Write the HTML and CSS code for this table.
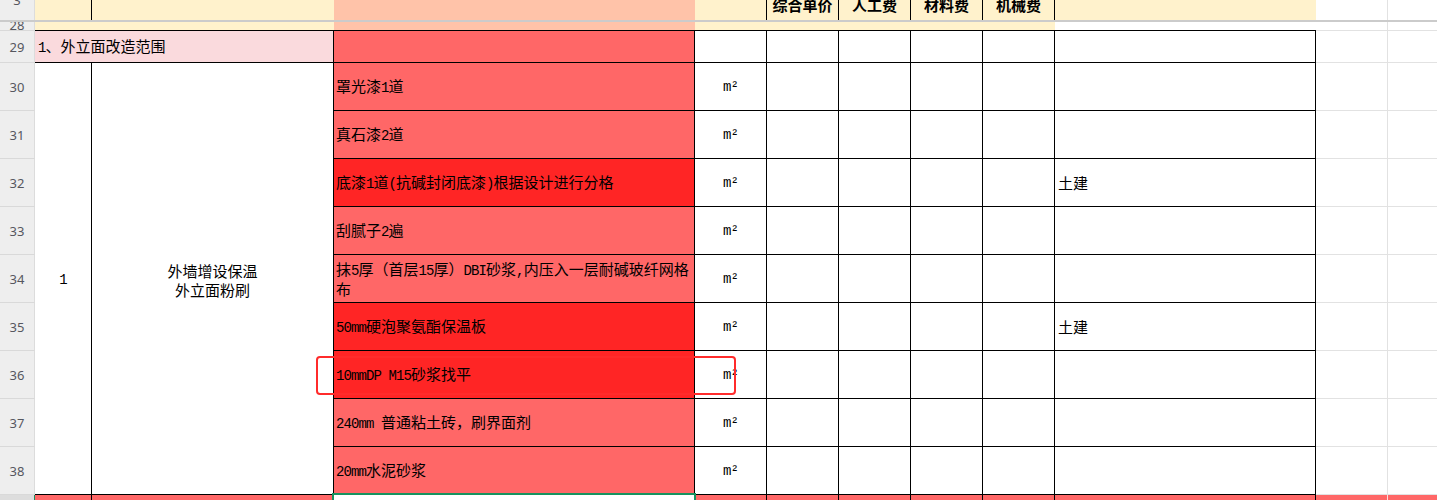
FILE: index.html
```html
<!DOCTYPE html>
<html lang="zh-CN">
<head>
<meta charset="utf-8">
<title>外立面改造范围</title>
<link rel="stylesheet" href="styles.css">
</head>
<body>
<div class="sheet">
  <div class="grid">
    <!-- row 3 -->
    <div class="rh rh-top"><span class="rn rn-3">3</span></div>
    <div class="f-yel bR"></div>
    <div class="f-yel"></div>
    <div class="f-pch"></div>
    <div class="f-yel bR"></div>
    <div class="f-yel bR hd"><span>综合单价</span></div>
    <div class="f-yel bR hd"><span>人工费</span></div>
    <div class="f-yel bR hd"><span>材料费</span></div>
    <div class="f-yel bR hd"><span>机械费</span></div>
    <div class="f-yel"></div>
    <div class="gR"></div>
    <div></div>

    <!-- freeze line -->
    <div class="freeze"></div>

    <!-- row 28 -->
    <div class="rh rh-top"><span class="rn rn-28">28</span></div>
    <div class="f-yel bB"></div>
    <div class="f-yel bB"></div>
    <div class="f-pch bB"></div>
    <div class="f-yel bB"></div>
    <div class="f-yel bB"></div>
    <div class="f-yel bB"></div>
    <div class="f-yel bB"></div>
    <div class="f-yel bB"></div>
    <div class="bB"></div>
    <div class="g"></div>
    <div class="gB"></div>

    <!-- row 29 -->
    <div class="rh"><span class="rn">29</span></div>
    <div class="c f-pnk span2 txt"><span class="t"><span class="l">1</span>、外立面改造范围</span></div>
    <div class="c f-red1"></div>
    <div class="c"></div>
    <div class="c"></div>
    <div class="c"></div>
    <div class="c"></div>
    <div class="c"></div>
    <div class="c"></div>
    <div class="g"></div>
    <div class="gB"></div>

    <!-- row 30 -->
    <div class="rh"><span class="rn">30</span></div>
    <div class="c tall center"><span class="t"><span class="l">1</span></span></div>
    <div class="c tall center"><span class="t multi">外墙增设保温<br>外立面粉刷</span></div>
    <div class="c f-red1 item"><span class="t">罩光漆<span class="l">1</span>道</span></div>
    <div class="c center"><span class="t l">m²</span></div>
    <div class="c"></div><div class="c"></div><div class="c"></div><div class="c"></div>
    <div class="c txt"></div>
    <div class="g"></div>
    <div class="gB"></div>

    <!-- row 31 -->
    <div class="rh"><span class="rn">31</span></div>
    <div class="c f-red1 item"><span class="t">真石漆<span class="l">2</span>道</span></div>
    <div class="c center"><span class="t l">m²</span></div>
    <div class="c"></div><div class="c"></div><div class="c"></div><div class="c"></div>
    <div class="c txt"></div>
    <div class="g"></div>
    <div class="gB"></div>

    <!-- row 32 -->
    <div class="rh"><span class="rn">32</span></div>
    <div class="c f-red2 item"><span class="t">底漆<span class="l">1</span>道<span class="l">(</span>抗碱封闭底漆<span class="l">)</span>根据设计进行分格</span></div>
    <div class="c center"><span class="t l">m²</span></div>
    <div class="c"></div><div class="c"></div><div class="c"></div><div class="c"></div>
    <div class="c txt"><span class="t">土建</span></div>
    <div class="g"></div>
    <div class="gB"></div>

    <!-- row 33 -->
    <div class="rh"><span class="rn">33</span></div>
    <div class="c f-red1 item"><span class="t">刮腻子<span class="l">2</span>遍</span></div>
    <div class="c center"><span class="t l">m²</span></div>
    <div class="c"></div><div class="c"></div><div class="c"></div><div class="c"></div>
    <div class="c txt"></div>
    <div class="g"></div>
    <div class="gB"></div>

    <!-- row 34 -->
    <div class="rh"><span class="rn">34</span></div>
    <div class="c f-red1 item"><span class="t wrap">抹<span class="l">5</span>厚（首层<span class="l">15</span>厚）<span class="l">DBI</span>砂浆<span class="l">,</span>内压入一层耐碱玻纤网格<br>布</span></div>
    <div class="c center"><span class="t l">m²</span></div>
    <div class="c"></div><div class="c"></div><div class="c"></div><div class="c"></div>
    <div class="c txt"></div>
    <div class="g"></div>
    <div class="gB"></div>

    <!-- row 35 -->
    <div class="rh"><span class="rn">35</span></div>
    <div class="c f-red2 item"><span class="t"><span class="l">50mm</span>硬泡聚氨酯保温板</span></div>
    <div class="c center"><span class="t l">m²</span></div>
    <div class="c"></div><div class="c"></div><div class="c"></div><div class="c"></div>
    <div class="c txt"><span class="t">土建</span></div>
    <div class="g"></div>
    <div class="gB"></div>

    <!-- row 36 -->
    <div class="rh"><span class="rn">36</span></div>
    <div class="c f-red2 item"><span class="t"><span class="l">10mmDP M15</span>砂浆找平</span></div>
    <div class="c center"><span class="t l">m²</span></div>
    <div class="c"></div><div class="c"></div><div class="c"></div><div class="c"></div>
    <div class="c txt"></div>
    <div class="g"></div>
    <div class="gB"></div>

    <!-- row 37 -->
    <div class="rh"><span class="rn">37</span></div>
    <div class="c f-red1 item"><span class="t"><span class="l">240mm </span>普通粘土砖，刷界面剂</span></div>
    <div class="c center"><span class="t l">m²</span></div>
    <div class="c"></div><div class="c"></div><div class="c"></div><div class="c"></div>
    <div class="c txt"></div>
    <div class="g"></div>
    <div class="gB"></div>

    <!-- row 38 -->
    <div class="rh"><span class="rn">38</span></div>
    <div class="c f-red1 item"><span class="t"><span class="l">20mm</span>水泥砂浆</span></div>
    <div class="c center"><span class="t l">m²</span></div>
    <div class="c"></div><div class="c"></div><div class="c"></div><div class="c"></div>
    <div class="c txt"></div>
    <div class="g"></div>
    <div class="gB"></div>

    <!-- row 39 -->
    <div class="rh rh-sel"></div>
    <div class="f-red1 bR"></div>
    <div class="f-red1 bR"></div>
    <div class="cur"></div>
    <div class="f-red1 bR"></div>
    <div class="f-red1 bR"></div>
    <div class="f-red1 bR"></div>
    <div class="f-red1 bR"></div>
    <div class="f-red1 bR"></div>
    <div class="f-red1 bR"></div>
    <div class="f-red1 pR"></div>
    <div class="f-red1"></div>
  </div>

  <div class="selection"></div>
  <div class="note"></div>
</div>
</body>
</html>
```

FILE: styles.css
```css
html, body {
  margin: 0;
  padding: 0;
  background: #ffffff;
}

body {
  overflow: hidden;
}

.sheet {
  position: relative;
  width: 1437px;
  height: 500px;
  overflow: hidden;
  font-family: "Noto Sans CJK SC", "Noto Sans", sans-serif;
  font-size: 15px;
  color: #000;
}

.grid {
  display: grid;
  grid-template-columns: 35px 57px 242px 361px repeat(5, 72px) 261px 72px 49px;
  grid-template-rows: 20px 2px 9px 32px repeat(9, 48px) 5px;
}

.grid > div {
  box-sizing: border-box;
  display: flex;
  align-items: center;
  min-width: 0;
  overflow: hidden;
  white-space: nowrap;
}

.t {
  display: block;
  line-height: 20px;
}

/* row headers */
.rh {
  background: #eeeeee;
  border-right: 1px solid #dcdcdc;
  border-bottom: 1px solid #d9d9d9;
  justify-content: center;
  font-family: "Noto Sans", "Liberation Sans", sans-serif;
  font-size: 13px;
  color: #56575f;
}

.grid > .rh-top {
  align-items: flex-start;
}

.rh:first-child {
  border-bottom: none;
}

.rn {
  display: block;
  line-height: 20px;
}

.rn-3 {
  margin-top: -10px;
}

.rn-28 {
  margin-top: -7px;
}

.rh-sel {
  background: #dddddd;
  border-right: 1px solid #16925f;
  border-bottom: none;
}

/* freeze line */
.freeze {
  grid-column: 1 / -1;
  background: #cbcbcb;
}

/* borders */
.c {
  border-right: 1px solid #000;
  border-bottom: 1px solid #000;
}

.bR {
  border-right: 1px solid #000;
}

.bB {
  border-bottom: 1px solid #000;
}

.g {
  border-right: 1px solid #e2e2e2;
  border-bottom: 1px solid #e2e2e2;
}

.gR {
  border-right: 1px solid #e2e2e2;
}

.gB {
  border-bottom: 1px solid #e2e2e2;
}

.pR {
  border-right: 1px solid #ffdede;
}

/* fills */
.f-yel { background: #fff2cc; }
.f-pch { background: #ffc3a9; }
.f-pnk { background: #fadadd; }
.f-red1 { background: #ff6767; }
.f-red2 { background: #ff2525; }
.cur { background: #ffffff; }

/* header labels in row 3 (partially scrolled out) */
.grid > .hd {
  justify-content: center;
  align-items: flex-start;
  font-weight: 700;
}

.hd span {
  display: block;
  line-height: 20px;
  margin-top: -5px;
}

/* content */
.span2 {
  grid-column: span 2;
}

.tall {
  grid-row: span 9;
}

.txt {
  padding-left: 3px;
}

.item {
  padding-left: 2px;
}

.wrap {
  line-height: 17px;
}

.center {
  justify-content: center;
  text-align: center;
}

.multi {
  line-height: 18.5px;
  margin-top: 4px;
}

.l {
  font-family: "Liberation Mono", monospace;
  font-size: 14px;
  letter-spacing: -0.9px;
}

/* overlays */
.selection {
  position: absolute;
  left: 332px;
  top: 493px;
  width: 364px;
  height: 20px;
  box-sizing: border-box;
  border: 2px solid #16925f;
}

.note {
  position: absolute;
  left: 316px;
  top: 356px;
  width: 420px;
  height: 39px;
  box-sizing: border-box;
  border: 2px solid #ff2b2b;
  border-radius: 4px;
}
```
